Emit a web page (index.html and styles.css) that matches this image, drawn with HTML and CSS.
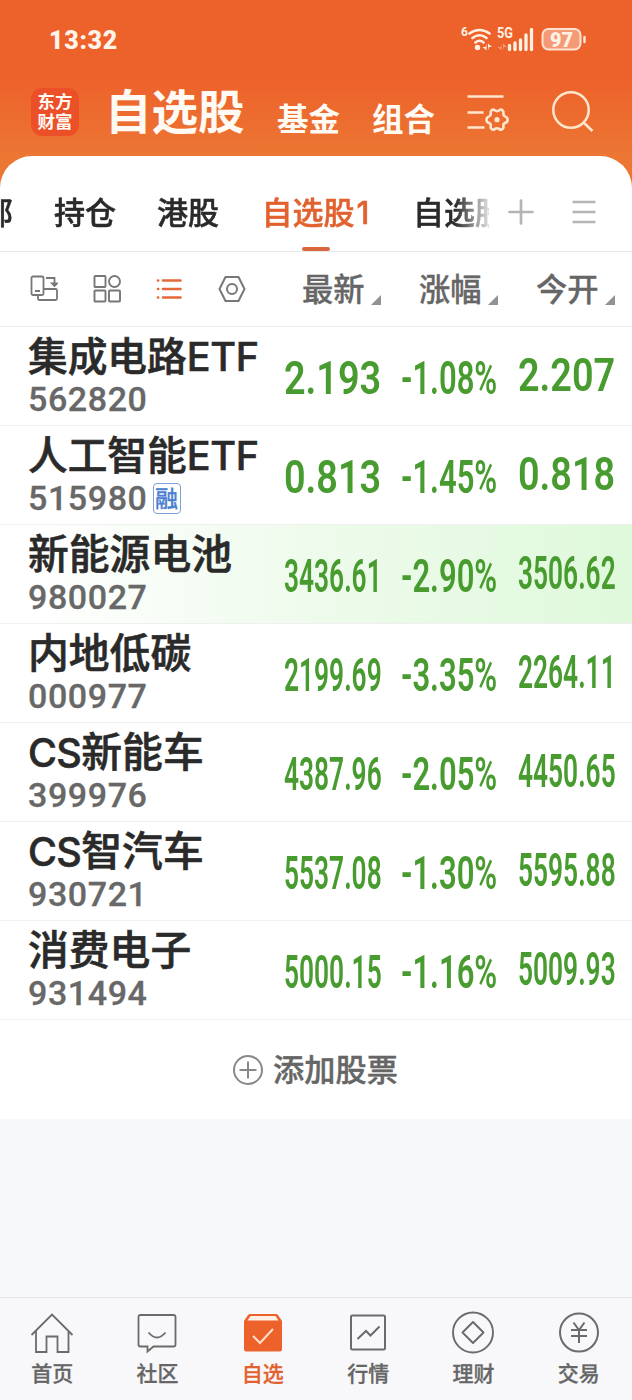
FILE: index.html
```html
<!DOCTYPE html>
<html lang="zh-CN">
<head>
    <meta charset="UTF-8">
    <meta name="viewport" content="width=device-width, initial-scale=1.0">
    <title>自选股</title>
    <link rel="stylesheet" href="styles.css">
</head>
<body>
    <div class="app">
        <header class="header">
            <div class="status-bar">
                <span class="time">13:32</span>
                <svg class="status-icons" width="126" height="30" viewBox="0 0 126 30">
                    <g fill="none" stroke="#fff2e4" stroke-width="2.6" stroke-linecap="round">
                        <path d="M8.500 8.500Q18.500 1.500 28.500 8.500M11.500 13Q18.500 7.500 25.500 13M14.500 17.500Q18.500 14 22.500 17.500"/>
                    </g>
                    <circle cx="16.500" cy="22.500" r="2.700" fill="#fff2e4"/>
                    <path d="M25.500 18.500v7l-4-3.500h3M27 25.500v-7l4 3.500h-3" fill="#fff2e4"/>
                    <text x="0" y="11" class="sig-small">6</text>
                    <text x="36" y="13" class="sig-net" textLength="16" lengthAdjust="spacingAndGlyphs">5G</text>
                    <path d="M40.500 18.500v7l-4-3.500h3M42 25.500v-7l4 3.500h-3" fill="#f59a75"/>
                    <path d="M48.500 24.500v-4M54 24.500v-6.500M59.500 24.500v-9.500M65 24.500v-14.500M70.500 24.500v-20" stroke="#fff2e4" stroke-width="3.300" stroke-linecap="round" fill="none"/>
                    <rect x="81.500" y="4" width="38" height="20.500" rx="6" fill="#f49a76" stroke="#ffe3d2" stroke-width="2"/>
                    <path d="M123.500 12v5" stroke="#ffe3d2" stroke-width="2.500" stroke-linecap="round"/>
                    <text x="89" y="21.500" class="battery" textLength="23" lengthAdjust="spacingAndGlyphs">97</text>
                </svg>
            </div>
            <div class="title-bar">
                <div class="logo">东方<br>财富</div>
                <h1>自选股</h1>
                <span class="nav-link">基金</span>
                <span class="nav-link">组合</span>
                <svg class="icon-manage" width="44" height="44" viewBox="0 0 44 44" fill="none" stroke="#ffe6cf" stroke-width="2.600">
                    <path d="M.5 5.500h36M.5 21.500h16M.5 36.500h17"/>
                    <path d="M24.500 19.500q1.500-1.500 3.200-.2 2.300 1.700 4.600 0 1.700-1.300 3.300.2 1.400 1.100.8 2.900-.5 2.200 2 3.200 2.200.8 2.200 3.100t-2.200 3.100q-2.500 1-2 3.200.6 1.800-.8 2.900-1.600 1.500-3.300.2-2.300-1.700-4.600 0-1.700 1.300-3.200-.2-1.400-1.100-.8-2.900.5-2.200-2-3.200-2.200-.8-2.200-3.100t2.200-3.100q2.500-1 2-3.200-.6-1.800.8-2.900z"/>
                    <circle cx="30" cy="28.700" r="2.600" fill="#ffe6cf" stroke="none"/>
                </svg>
                <svg class="icon-search" width="44" height="44" viewBox="0 0 44 44" fill="none" stroke="#ffe6cf" stroke-width="2.500">
                    <circle cx="20" cy="20" r="17.700"/>
                    <path d="M32.500 32.500l9 8.500"/>
                </svg>
            </div>
        </header>

        <main class="card">
            <nav class="tabs">
                <div class="tab-strip">
                    <span class="tab">全部</span>
                    <span class="tab">持仓</span>
                    <span class="tab">港股</span>
                    <span class="tab active"><span>自选股<span class="latin">1</span></span></span>
                    <span class="tab">自选股2</span>
                </div>
                <svg class="icon-plus" width="26" height="26" viewBox="0 0 26 26" stroke="#b5b5b5" stroke-width="2.700" stroke-linecap="round">
                    <path d="M1.500 13h23M13 1.500v23"/>
                </svg>
                <svg class="icon-menu" width="26" height="26" viewBox="0 0 26 26" stroke="#b5b5b5" stroke-width="2.600">
                    <path d="M1.500 3h23M1.500 13h23M1.500 23h23"/>
                </svg>
            </nav>

            <div class="toolbar">
                <div class="views">
                    <svg width="28" height="28" viewBox="0 0 28 28" fill="none" stroke="#777" stroke-width="1.800">
                        <rect x="1.500" y="1.500" width="12" height="18.500" rx="1.500"/>
                        <path d="M5 16h5M16 3h8.500v7M13.500 14h12q1.500 0 1.500 1.500v8q0 1.500-1.500 1.500h-16q-1.500 0-1.500-1.500V20"/>
                        <path d="M22 8.500h5l-2.500 2.500z" fill="#777"/>
                    </svg>
                    <svg width="28" height="28" viewBox="0 0 28 28" fill="none" stroke="#777" stroke-width="1.900">
                        <rect x="1.500" y="1" width="11" height="11" rx=".8"/>
                        <circle cx="21.500" cy="6.500" r="5.500"/>
                        <rect x="1.500" y="15.500" width="11" height="11" rx=".8"/>
                        <rect x="16" y="15.500" width="11" height="11" rx=".8"/>
                    </svg>
                    <svg width="28" height="28" viewBox="0 0 28 28" fill="none" stroke="#e4683a" stroke-width="2.600" stroke-linecap="round">
                        <path d="M3 5.500h.2M3 14h.2M3 22.500h.2M8 5.500h17.500M8 14h17.500M8 22.500h17.500"/>
                    </svg>
                    <svg width="28" height="28" viewBox="0 0 28 28" fill="none" stroke="#777" stroke-width="2" stroke-linejoin="round">
                        <path d="M7.500 2h13l6 12-6 12h-13l-6-12z"/>
                        <circle cx="14" cy="14" r="5"/>
                    </svg>
                </div>
                <span class="sort">最新</span>
                <span class="sort">涨幅</span>
                <span class="sort">今开</span>
            </div>

            <ul class="stocks">
                <li class="stock short">
                    <div class="info"><div class="name mixed">集成电路<span class="latin">ETF</span></div><div class="code">562820</div></div>
                    <div class="cell"><span class="num">2.193</span></div>
                    <div class="cell"><span class="pct">-1.08%</span></div>
                    <div class="cell open"><span class="num">2.207</span></div>
                </li>
                <li class="stock short">
                    <div class="info"><div class="name mixed">人工智能<span class="latin">ETF</span></div><div class="code">515980<span class="tag">融</span></div></div>
                    <div class="cell"><span class="num">0.813</span></div>
                    <div class="cell"><span class="pct">-1.45%</span></div>
                    <div class="cell open"><span class="num">0.818</span></div>
                </li>
                <li class="stock falling">
                    <div class="info"><div class="name">新能源电池</div><div class="code">980027</div></div>
                    <div class="cell"><span class="num">3436.61</span></div>
                    <div class="cell"><span class="pct">-2.90%</span></div>
                    <div class="cell open"><span class="num">3506.62</span></div>
                </li>
                <li class="stock">
                    <div class="info"><div class="name">内地低碳</div><div class="code">000977</div></div>
                    <div class="cell"><span class="num">2199.69</span></div>
                    <div class="cell"><span class="pct">-3.35%</span></div>
                    <div class="cell open"><span class="num">2264.11</span></div>
                </li>
                <li class="stock">
                    <div class="info"><div class="name"><span class="latin">CS</span>新能车</div><div class="code">399976</div></div>
                    <div class="cell"><span class="num">4387.96</span></div>
                    <div class="cell"><span class="pct">-2.05%</span></div>
                    <div class="cell open"><span class="num">4450.65</span></div>
                </li>
                <li class="stock">
                    <div class="info"><div class="name"><span class="latin">CS</span>智汽车</div><div class="code">930721</div></div>
                    <div class="cell"><span class="num">5537.08</span></div>
                    <div class="cell"><span class="pct">-1.30%</span></div>
                    <div class="cell open"><span class="num">5595.88</span></div>
                </li>
                <li class="stock">
                    <div class="info"><div class="name">消费电子</div><div class="code">931494</div></div>
                    <div class="cell"><span class="num">5000.15</span></div>
                    <div class="cell"><span class="pct">-1.16%</span></div>
                    <div class="cell open"><span class="num">5009.93</span></div>
                </li>
            </ul>

            <div class="add-stock">
                <svg width="30" height="30" viewBox="0 0 30 30" fill="none" stroke="#888" stroke-width="2">
                    <circle cx="15" cy="15" r="14"/>
                    <path d="M6.500 15h17M15 6.500v17"/>
                </svg>
                <span>添加股票</span>
            </div>
        </main>

        <footer class="bottom-nav">
            <div class="nav-item">
                <svg width="44" height="44" viewBox="0 0 44 44" fill="none" stroke="#6b6b6b" stroke-width="1.800">
                    <path d="M1.500 25L22 4.500 42.500 25M6 21v21h10.500V26.500h11V42H38.500V21"/>
                </svg>
                <span>首页</span>
            </div>
            <div class="nav-item">
                <svg width="44" height="44" viewBox="0 0 44 44" fill="none" stroke="#6b6b6b" stroke-width="1.800">
                    <path d="M5.500 5h33q2 0 2 2v27.500q0 2-2 2h-20l-6 5v-5h-7q-2 0-2-2V7q0-2 2-2z"/>
                    <path d="M13.500 22.500q8.500 10 17 0"/>
                </svg>
                <span>社区</span>
            </div>
            <div class="nav-item current">
                <svg width="44" height="44" viewBox="0 0 44 44" fill="none">
                    <path d="M9 4h26q1 0 2 1l4 6v28q0 2.500-2.500 2.500h-33Q3 41.500 3 39V11l4-6q1-1 2-1z" fill="#ed622b"/>
                    <path d="M9.500 6h25l3 4.500h-31z" fill="#fff0e6"/>
                    <path d="M12 26l7 7 13-14" stroke="#ffe0cd" stroke-width="2"/>
                </svg>
                <span>自选</span>
            </div>
            <div class="nav-item">
                <svg width="44" height="44" viewBox="0 0 44 44" fill="none" stroke="#6b6b6b" stroke-width="2">
                    <rect x="5" y="5.500" width="34" height="34" rx="1.200"/>
                    <path d="M11.500 29l8.500-8 4.500 4.500 9-9"/>
                </svg>
                <span>行情</span>
            </div>
            <div class="nav-item">
                <svg width="44" height="44" viewBox="0 0 44 44" fill="none" stroke="#6b6b6b" stroke-width="1.900" stroke-linejoin="round">
                    <circle cx="22" cy="22.500" r="20"/>
                    <path d="M22 12l10.500 10.500L22 33 11.500 22.500z"/>
                </svg>
                <span>理财</span>
            </div>
            <div class="nav-item">
                <svg width="44" height="44" viewBox="0 0 44 44" fill="none" stroke="#6b6b6b" stroke-width="2">
                    <circle cx="22" cy="22.500" r="19"/>
                    <path d="M16.500 12.500l5.500 7.500 5.500-7.500M14 20h16M14 26h16M22 20v13"/>
                </svg>
                <span>交易</span>
            </div>
        </footer>
    </div>
</body>
</html>
```

FILE: styles.css
```css
* {
    margin: 0;
    padding: 0;
    box-sizing: border-box;
}

body {
    font-family: "Noto Sans CJK SC", sans-serif;
    font-weight: 500;
    color: #2a2a2a;
    background-color: #f7f8fa;
}

svg {
    display: block;
    flex: none;
}

.app {
    display: flex;
    flex-direction: column;
    width: 632px;
    height: 1400px;
    overflow: hidden;
    background: linear-gradient(#ed612a 0, #ed612a 75px, #ec7633 156px, #ec7633 200px, #f7f8fa 200px);
}

/* Header */
.header {
    height: 156px;
    color: #fffaf3;
}

.status-bar {
    display: flex;
    justify-content: space-between;
    align-items: center;
    height: 78px;
    padding: 1px 45px 0 49px;
}

.time {
    padding-top: 1px;
    font-family: Roboto, sans-serif;
    font-size: 25px;
    font-weight: 900;
    letter-spacing: 0.7px;
    color: #fff4e9;
}

.sig-small,
.sig-net,
.battery {
    font-family: Roboto, sans-serif;
    font-weight: 700;
    fill: #fff2e4;
}

.sig-small {
    font-size: 12px;
}

.sig-net {
    font-size: 15px;
}

.battery {
    font-size: 21px;
    font-weight: 900;
}

.title-bar {
    display: flex;
    align-items: flex-start;
    height: 78px;
    padding-left: 31px;
}

.logo {
    width: 48px;
    height: 48px;
    margin: 10px 26px 0 0;
    padding-top: 3px;
    border-radius: 11px;
    background-color: #ec5029;
    font-size: 17.5px;
    font-weight: 700;
    line-height: 20px;
    text-align: center;
}

h1 {
    width: 172px;
    font-size: 46.5px;
    font-weight: 700;
    line-height: 62px;
}

.nav-link {
    width: 95px;
    font-size: 31.5px;
    font-weight: 700;
    line-height: 79px;
}

.icon-manage {
    margin: 13px 0 0 0;
}

.icon-search {
    margin: 12px 0 0 40px;
}

/* Card */
.card {
    border-radius: 32px 32px 0 0;
    background-color: #fff;
}

.tabs {
    display: flex;
    align-items: center;
    height: 96px;
    border-bottom: 1px solid #e9e9e9;
}

.tab-strip {
    display: flex;
    gap: 41px;
    width: 489px;
    height: 96px;
    padding-top: 16px;
    overflow: hidden;
    -webkit-mask-image: linear-gradient(to right, #000 455px, transparent 495px);
    mask-image: linear-gradient(to right, #000 455px, transparent 495px);
}

.tab {
    flex: none;
    height: 79px;
    font-size: 31px;
    font-weight: 500;
    line-height: 77px;
    white-space: nowrap;
    -webkit-text-stroke: 0.5px currentColor;
}

.tab:first-child {
    margin-left: -49px;
}

.tab.active {
    display: flex;
    flex-direction: column;
    align-items: center;
    width: 112px;
    color: #e2622f;
}

.tab.active::after {
    content: "";
    width: 28px;
    height: 4px;
    margin-top: -2px;
    border-radius: 2px;
    background-color: #d9673d;
}

.latin {
    font-family: Inter, sans-serif;
    font-weight: 500;
    line-height: 1;
}

.tab .latin {
    padding: 0 1px 0 2px;
}

.icon-plus {
    margin: 16px 0 0 19px;
}

.icon-menu {
    margin: 16px 0 0 37px;
}

.toolbar {
    display: grid;
    grid-template-columns: 302px 117px 117px 1fr;
    align-items: center;
    height: 75px;
    border-bottom: 1px solid #eee;
}

.views {
    display: flex;
    gap: 34.5px;
    padding-left: 30px;
}

.sort {
    display: flex;
    align-items: center;
    height: 74px;
    padding-bottom: 3px;
    font-size: 31.3px;
    font-weight: 500;
    line-height: 70px;
    color: #666;
    -webkit-text-stroke: 0.3px currentColor;
}

.sort::after {
    content: "";
    margin: 24px 0 0 6px;
    border-left: 10px solid transparent;
    border-bottom: 10px solid #929295;
}

/* Stock rows */
.stocks {
    list-style: none;
}

.stock {
    display: grid;
    grid-template-columns: 284px 118px 116px 1fr;
    height: 99px;
    border-bottom: 1px solid #f0f0f0;
}

.stock.falling {
    background: linear-gradient(to right, #fff 30px, #effbed 300px, #dff9db);
}

.info {
    padding-left: 28px;
}

.name {
    height: 55px;
    font-size: 40.8px;
    font-weight: 500;
    line-height: 53px;
    white-space: nowrap;
    -webkit-text-stroke: 0.6px currentColor;
}

.name .latin {
    font-size: 39.5px;
    letter-spacing: -0.6px;
}

.name.mixed {
    font-size: 39.7px;
}

.name.mixed .latin {
    font-size: 39.5px;
    letter-spacing: -0.3px;
}

.code {
    display: flex;
    align-items: center;
    height: 34px;
    font-family: Roboto, sans-serif;
    font-size: 34px;
    font-weight: 500;
    line-height: 34px;
    letter-spacing: 0.6px;
    color: #686868;
    -webkit-text-stroke: 0.3px currentColor;
}

.tag {
    width: 28px;
    height: 31px;
    margin-left: 5px;
    border: 1px solid #7ca0d6;
    border-radius: 4px;
    font-family: "Noto Sans CJK SC", sans-serif;
    font-size: 23px;
    line-height: 27px;
    letter-spacing: 0;
    text-align: center;
    color: #4a7fd0;
}

.cell {
    height: 98px;
    font-family: Roboto, sans-serif;
    font-size: 47px;
    font-weight: 600;
    line-height: 101px;
    white-space: nowrap;
    color: #479b2f;
}

.cell.open {
    line-height: 96px;
}

/* Figures are condensed to fit the column */
.num,
.pct {
    display: inline-block;
    transform: scaleX(0.56);
    transform-origin: left;
}

.short .num {
    transform: scaleX(0.805);
}

.pct {
    transform: scaleX(0.66);
    margin-left: -1px;
}

.add-stock {
    display: flex;
    justify-content: center;
    align-items: center;
    gap: 10px;
    height: 99px;
    padding-right: 1px;
    font-size: 31.2px;
    line-height: 44px;
    color: #666;
    -webkit-text-stroke: 0.4px currentColor;
}

.add-stock span {
    margin-top: -3px;
}

/* Bottom navigation */
.bottom-nav {
    display: flex;
    height: 103px;
    margin-top: auto;
    border-top: 1px solid #e6e6e8;
    background-color: #f8f8fb;
}

.nav-item {
    display: flex;
    flex: 1;
    flex-direction: column;
    align-items: center;
    padding: 12px 1px 0 0;
    font-size: 21px;
    line-height: 37px;
    color: #666;
    -webkit-text-stroke: 0.3px currentColor;
}

.nav-item.current {
    color: #e2622f;
}
```
